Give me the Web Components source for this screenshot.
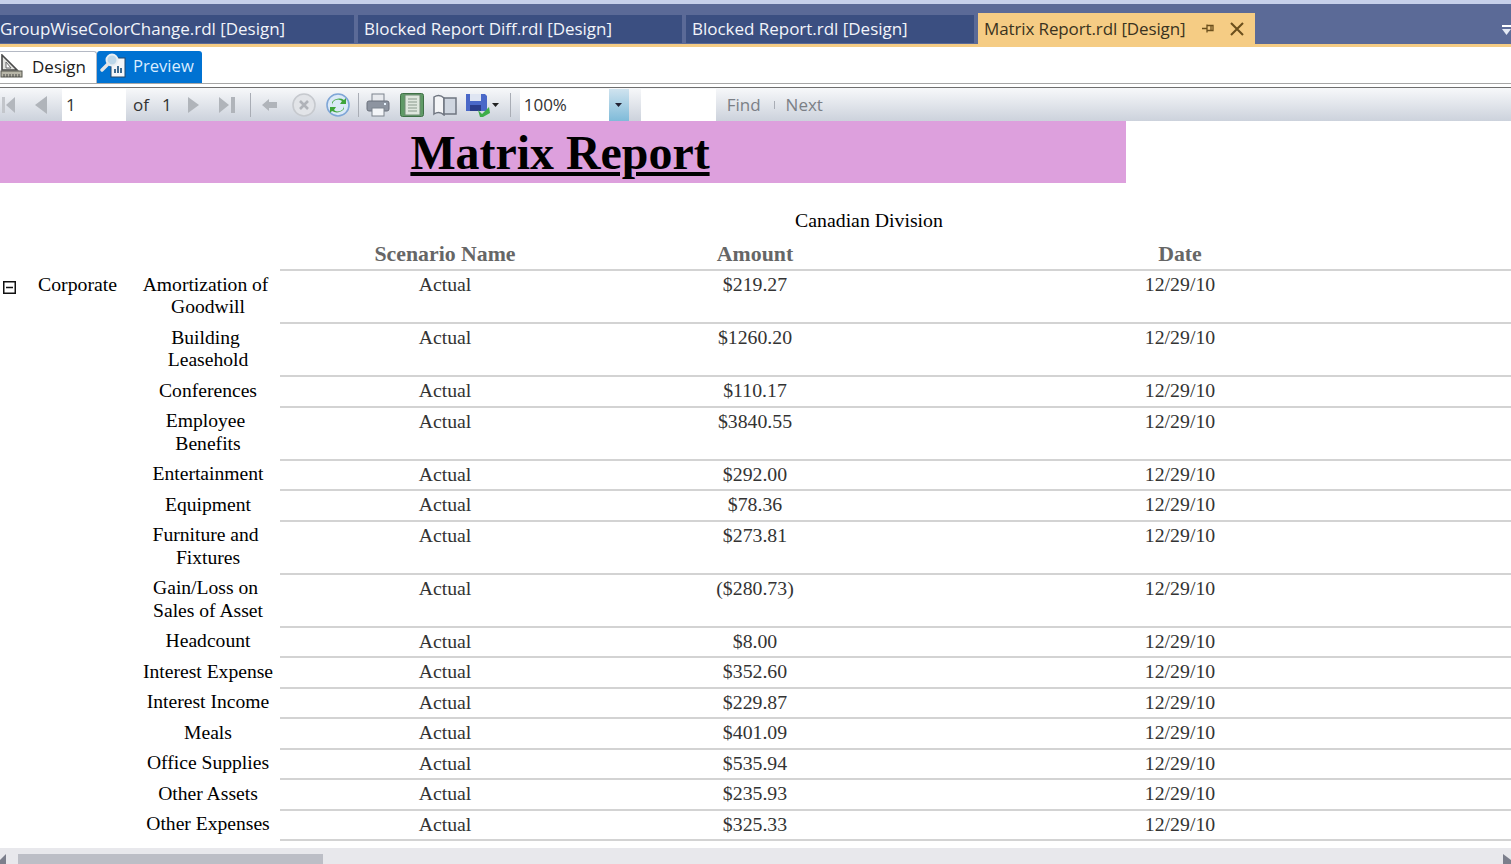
<!DOCTYPE html>
<html>
<head>
<meta charset="utf-8">
<title>Matrix Report</title>
<style>
  html, body { margin: 0; height: 100%; overflow: hidden; background: #fff; }
  vs-shell { height: 864px; }
</style>
</head>
<body>
<vs-shell>
  <vs-tabs>
    <vs-tab style="width:354px" clip>GroupWiseColorChange.rdl [Design]</vs-tab>
    <vs-tab style="width:324px">Blocked Report Diff.rdl [Design]</vs-tab>
    <vs-tab style="width:288px">Blocked Report.rdl [Design]</vs-tab>
    <vs-tab style="width:277px" active>Matrix Report.rdl [Design]</vs-tab>
  </vs-tabs>
  <view-switch></view-switch>
  <report-toolbar></report-toolbar>
  <report-page>
    <matrix-row amount="$219.27">Amortization of&nbsp;<br>Goodwill</matrix-row>
    <matrix-row amount="$1260.20">Building&nbsp;<br>Leasehold</matrix-row>
    <matrix-row amount="$110.17">Conferences</matrix-row>
    <matrix-row amount="$3840.55">Employee&nbsp;<br>Benefits</matrix-row>
    <matrix-row amount="$292.00">Entertainment</matrix-row>
    <matrix-row amount="$78.36">Equipment</matrix-row>
    <matrix-row amount="$273.81">Furniture and&nbsp;<br>Fixtures</matrix-row>
    <matrix-row amount="($280.73)">Gain/Loss on&nbsp;<br>Sales of Asset</matrix-row>
    <matrix-row amount="$8.00">Headcount</matrix-row>
    <matrix-row amount="$352.60">Interest Expense</matrix-row>
    <matrix-row amount="$229.87">Interest Income</matrix-row>
    <matrix-row amount="$401.09">Meals</matrix-row>
    <matrix-row amount="$535.94">Office Supplies</matrix-row>
    <matrix-row amount="$235.93">Other Assets</matrix-row>
    <matrix-row amount="$325.33">Other Expenses</matrix-row>
  </report-page>
  <h-scroll></h-scroll>
</vs-shell>

<script>
const UI_FONT = `"Open Sans", "Noto Sans", sans-serif`;

class VsShell extends HTMLElement {
    constructor() {
        super();
        this.attachShadow({ mode: "open" }).innerHTML = `
            <style>
                :host { display: flex; flex-direction: column; width: 100%; overflow: hidden; }
            </style>
            <slot></slot>`;
    }
}

class VsTabs extends HTMLElement {
    constructor() {
        super();
        this.attachShadow({ mode: "open" }).innerHTML = `
            <style>
                :host { display: block; flex: none; background: #c6d0ea; padding-top: 4px; }
                .bar { height: 40px; background: #5b6a97; display: flex; align-items: flex-end; gap: 4px; position: relative; }
                .accent { height: 3px; background: #f5cc84; }
                .more { position: absolute; right: 0; top: 20px; }
            </style>
            <div class="bar">
                <slot></slot>
                <svg class="more" width="9" height="13" viewBox="0 0 9 13">
                    <rect x="0" y="1" width="9" height="2" fill="#fff"/>
                    <path d="M0 5h9L4.5 11z" fill="#e4e9f4"/>
                </svg>
            </div>
            <div class="accent"></div>`;
    }
}

class VsTab extends HTMLElement {
    constructor() {
        super();
        this.attachShadow({ mode: "open" }).innerHTML = `
            <style>
                :host { display: flex; flex: none; align-items: center; box-sizing: border-box; height: 28px; margin-bottom: 1px;
                        background: #3b4f81; color: #f2f4fa; padding-left: 6px; overflow: hidden; white-space: nowrap;
                        font: 17px/28px ${UI_FONT}; letter-spacing: -0.02px; }
                :host([clip]) { padding-left: 0; }
                :host([active]) { height: 31px; margin-bottom: 0; background: #f5cc84; color: #3a3320; letter-spacing: -0.12px; }
                .tools { display: none; align-items: center; margin-left: 17px; gap: 15px; }
                :host([active]) .tools { display: flex; }
            </style>
            <slot></slot>
            <span class="tools">
                <svg width="13" height="11" viewBox="0 0 13 11"><path d="M0 5.5h5M5 1.5v8M5 2.5h6v5H5M9 2.5v5" fill="none" stroke="#6b4f1c" stroke-width="1.3"/></svg>
                <svg width="14" height="14" viewBox="0 0 14 14"><path d="M1 1l12 12M13 1L1 13" stroke="#6b4f1c" stroke-width="2.1"/></svg>
            </span>`;
    }
}

class ViewSwitch extends HTMLElement {
    constructor() {
        super();
        this.attachShadow({ mode: "open" }).innerHTML = `
            <style>
                :host { display: flex; flex: none; align-items: flex-end; height: 37px; padding-top: 4px; box-sizing: border-box;
                        border-bottom: 1px solid #a6a6a6; font: 17px ${UI_FONT}; }
                .tab { display: flex; align-items: center; height: 32px; box-sizing: border-box; padding-bottom: 3px; }
                .design { width: 97px; border-top: 1px solid #b4b9c4; border-right: 1px solid #b4b9c4; border-radius: 0 3px 0 0; color: #1c1c1c; }
                .design svg { margin: 0 9px 0 0; }
                .preview { width: 105px; background: #0072d2; color: #d9ecff; border-radius: 3px 3px 0 0; font-size: 16.6px; }
                .preview svg { margin: 0 6px 0 3px; }
            </style>
            <div class="tab design">
                <svg width="23" height="24" viewBox="0 0 23 24">
                    <path d="M2 1l15 15H2z" fill="#e4e4e0" stroke="#4a4a4a" stroke-width="1.6"/>
                    <path d="M6 8l5 6H6z" fill="#fff" stroke="#6a6a6a"/>
                    <rect x="1" y="17" width="21" height="6" fill="#b8b6a8" stroke="#55554c"/>
                    <path d="M4 20v3M7 20v3M10 20v3M13 20v3M16 20v3M19 20v3" stroke="#444"/>
                </svg>
                <span>Design</span>
            </div>
            <div class="tab preview">
                <svg width="27" height="25" viewBox="0 0 27 25">
                    <rect x="11" y="5" width="14" height="19" fill="#f4f6f8" stroke="#23466b"/>
                    <path d="M15 20v-4M18 20v-7M21 20v-5" stroke="#3f6a8f" stroke-width="2"/>
                    <circle cx="12" cy="7" r="5.5" fill="#bcd6e8" stroke="#e8eef2" stroke-width="2"/>
                    <path d="M8 11l-6 6" stroke="#e6e6e6" stroke-width="3.4" stroke-linecap="round"/>
                </svg>
                <span>Preview</span>
            </div>`;
    }
}

class ReportToolbar extends HTMLElement {
    constructor() {
        super();
        this.attachShadow({ mode: "open" }).innerHTML = `
            <style>
                :host { display: flex; flex: none; align-items: center; height: 34px; box-sizing: border-box; margin-top: 3px;
                        border-top: 1px solid #6f6f6f; background: linear-gradient(#f7f8fa, #ccd2dc);
                        font: 17px ${UI_FONT}; color: #333; overflow: hidden; white-space: nowrap; }
                svg { flex: none; display: block; }
                .input { flex: none; box-sizing: border-box; height: 32px; background: #fff; align-self: flex-end; line-height: 32px; }
                .sep { flex: none; width: 1px; height: 24px; background: #a9adb5; }
                .zoom { display: flex; justify-content: space-between; padding-left: 4px; }
                .drop { display: flex; width: 20px; align-items: center; justify-content: center; background: linear-gradient(#cfe3ef, #7fbbd9); }
                .dim { color: #7b7f86; }
            </style>
            <svg style="margin-left:2px" width="13" height="18" viewBox="0 0 13 18"><rect x="0" y="1" width="3" height="16" fill="#c3c6cb"/><path d="M13 1v16L4 9z" fill="#b3b7bd"/></svg>
            <svg style="margin-left:19px" width="13" height="18" viewBox="0 0 13 18"><path d="M13 0v18L1 9z" fill="#b0b4ba"/></svg>
            <div class="input" style="margin-left:15px;width:64px;padding-left:4px">1</div>
            <span style="margin-left:7px">of</span>
            <span style="margin-left:13px">1</span>
            <svg style="margin-left:16px" width="11" height="18" viewBox="0 0 11 18"><path d="M0 1v16l11-8z" fill="#b0b4ba"/></svg>
            <svg style="margin-left:20px" width="16" height="18" viewBox="0 0 16 18"><path d="M0 1v16l10-8z" fill="#b0b4ba"/><rect x="12" y="1" width="4" height="16" fill="#b0b4ba"/></svg>
            <div class="sep" style="margin-left:15px"></div>
            <svg style="margin-left:11px" width="15" height="14" viewBox="0 0 15 14"><path d="M0 7l7-6v3h8v6H7v3z" fill="#b0b4ba"/></svg>
            <svg style="margin-left:15px" width="24" height="24" viewBox="0 0 24 24"><circle cx="12" cy="12" r="11" fill="#e2e4e8" stroke="#c6c9ce" stroke-width="1.6"/><path d="M8 8l8 8M16 8l-8 8" stroke="#b0b3b9" stroke-width="2.6"/></svg>
            <svg style="margin-left:10px" width="24" height="24" viewBox="0 0 24 24"><circle cx="12" cy="12" r="11" fill="#dbe9f7" stroke="#7fa6d6" stroke-width="1.6"/><path d="M6 11a6 6 0 0 1 10-4l-2 3h6V4l-2 2A9 9 0 0 0 6 8z" transform="translate(0 1)" fill="#3fa53a"/><path d="M18 13a6 6 0 0 1-10 4l2-3H4v6l2-2a9 9 0 0 0 12-2z" fill="#3fa53a"/></svg>
            <div class="sep" style="margin-left:8px"></div>
            <svg style="margin-left:7px" width="24" height="24" viewBox="0 0 24 24"><rect x="6" y="1" width="12" height="8" fill="#e8eaee" stroke="#7d838d"/><rect x="1" y="8" width="22" height="10" rx="2" fill="#8d94a0" stroke="#6b717c"/><rect x="6" y="15" width="12" height="8" fill="#f3f5f8" stroke="#7d838d"/><rect x="18" y="10" width="2" height="2" fill="#e8f4ff"/></svg>
            <svg style="margin-left:10px" width="24" height="24" viewBox="0 0 24 24"><rect x="0.5" y="0.5" width="23" height="23" rx="2" fill="#5f9a66" stroke="#3f7046"/><rect x="5" y="2" width="15" height="20" fill="#dfe7de" stroke="#6f8a73"/><path d="M8 6h9M8 9h9M8 12h9M8 15h9M8 18h9" stroke="#8a9a8c" stroke-width="1.2"/></svg>
            <svg style="margin-left:9px" width="24" height="22" viewBox="0 0 24 22"><path d="M1 3c3-2 7-2 10 1v17c-3-3-7-3-10-1z" fill="#f4f5f7" stroke="#6f7580" stroke-width="1.5"/><path d="M11 4h12v16H11z" fill="#cfd6e0" stroke="#6f7580" stroke-width="1.5"/></svg>
            <svg style="margin-left:9px" width="24" height="24" viewBox="0 0 24 24"><path d="M0 1h19l2 2v15H0z" fill="#4a68c8"/><rect x="4" y="1" width="11" height="7" fill="#dfe5f2"/><rect x="4" y="12" width="11" height="6" fill="#2a3c8a"/><path d="M12 17l4 4 7-7 1 6-7 4h-3z" fill="#3fae4a"/></svg>
            <svg style="margin-left:2px" width="7" height="4" viewBox="0 0 7 4"><path d="M0 0h7L3.5 4z" fill="#222"/></svg>
            <div class="sep" style="margin-left:11px"></div>
            <div class="input zoom" style="margin-left:9px;width:109px"><span>100%</span><span class="drop"><svg width="7" height="4" viewBox="0 0 7 4"><path d="M0 0h7L3.5 4z" fill="#223"/></svg></span></div>
            <div class="input" style="margin-left:12px;width:75px"></div>
            <span class="dim" style="margin-left:11px">Find</span>
            <div class="sep" style="margin-left:13px;height:8px"></div>
            <span class="dim" style="margin-left:11px">Next</span>`;
    }
}

const dataColumns = `grid-template-columns: 330px 290px 560px 51px; width: 1231px;`;

class ReportPage extends HTMLElement {
    constructor() {
        super();
        this.attachShadow({ mode: "open" }).innerHTML = `
            <style>
                :host { display: block; flex: 1; min-height: 0; overflow: hidden; background: #fff;
                        font: 19.6px/22.5px "Liberation Serif", "Times New Roman", serif; color: #000; }
                .banner { width: 1126px; height: 62px; box-sizing: border-box; padding-right: 6px; background: #dda0dd; text-align: center;
                          font: bold 47.9px/64px "Liberation Serif", serif; text-decoration: underline; }
                .division { margin: 25px 0 0 280px; width: 1178px; text-align: center; height: 33px; line-height: 24px; font-size: 19.8px; }
                .heads { display: grid; ${dataColumns} margin-left: 280px; height: 30px; box-sizing: border-box; border-bottom: 2px solid #d3d3d3;
                         font-weight: bold; font-size: 21.8px; line-height: 26px; color: #666; text-align: center; }
                .group { display: flex; }
                .corp { flex: none; width: 136px; display: flex; align-items: flex-start; padding-top: 2px; box-sizing: border-box; }
                .corp svg { margin: 8px 0 0 3px; flex: none; }
                .corp span { margin-left: 22px; font-size: 19.8px; }
                .rows { flex: none; }
            </style>
            <div class="banner">Matrix Report</div>
            <div class="division">Canadian Division</div>
            <div class="heads"><span>Scenario Name</span><span>Amount</span><span>Date</span></div>
            <div class="group">
                <div class="corp">
                    <svg width="13" height="13" viewBox="0 0 13 13"><rect x="0.75" y="0.75" width="11.5" height="11.5" fill="#fff" stroke="#111" stroke-width="1.5"/><path d="M3 6.5h7" stroke="#111" stroke-width="1.5"/></svg>
                    <span>Corporate</span>
                </div>
                <div class="rows"><slot></slot></div>
            </div>`;
    }
}

class MatrixRow extends HTMLElement {
    constructor() {
        super();
        this.attachShadow({ mode: "open" }).innerHTML = `
            <style>
                :host { display: flex; }
                .label { flex: none; width: 144px; box-sizing: border-box; padding: 2.625px 0 5.375px; text-align: center; white-space: nowrap; }
                .data { display: grid; ${dataColumns} box-sizing: border-box; padding: 2px 0 4px; border-bottom: 2px solid #d3d3d3;
                        text-align: center; color: #333; font-size: 19.8px; }
            </style>
            <div class="label"><slot></slot></div>
            <div class="data">
                <span>Actual</span>
                <span class="amount"></span>
                <span>12/29/10</span>
            </div>`;
    }

    connectedCallback() {
        this.shadowRoot.querySelector(".amount").textContent = this.getAttribute("amount");
    }
}

class HScroll extends HTMLElement {
    constructor() {
        super();
        this.attachShadow({ mode: "open" }).innerHTML = `
            <style>
                :host { display: flex; flex: none; height: 16px; background: #e8e8ec; align-items: flex-end; justify-content: space-between; }
                .thumb { width: 305px; height: 10px; background: #bcbec6; margin-left: 11px; }
                .left { display: flex; align-items: flex-end; }
                svg { display: block; margin-bottom: 0; }
            </style>
            <div class="left">
                <svg width="7" height="10" viewBox="0 0 7 10"><path d="M6 0v10H0V6z" fill="#7c7f8c"/></svg>
                <div class="thumb"></div>
            </div>
            <svg width="8" height="10" viewBox="0 0 8 10"><path d="M0 0l8 6v4H0z" fill="#7c7f8c"/></svg>`;
    }
}

customElements.define("vs-shell", VsShell);
customElements.define("vs-tabs", VsTabs);
customElements.define("vs-tab", VsTab);
customElements.define("view-switch", ViewSwitch);
customElements.define("report-toolbar", ReportToolbar);
customElements.define("report-page", ReportPage);
customElements.define("matrix-row", MatrixRow);
customElements.define("h-scroll", HScroll);
</script>
</body>
</html>
